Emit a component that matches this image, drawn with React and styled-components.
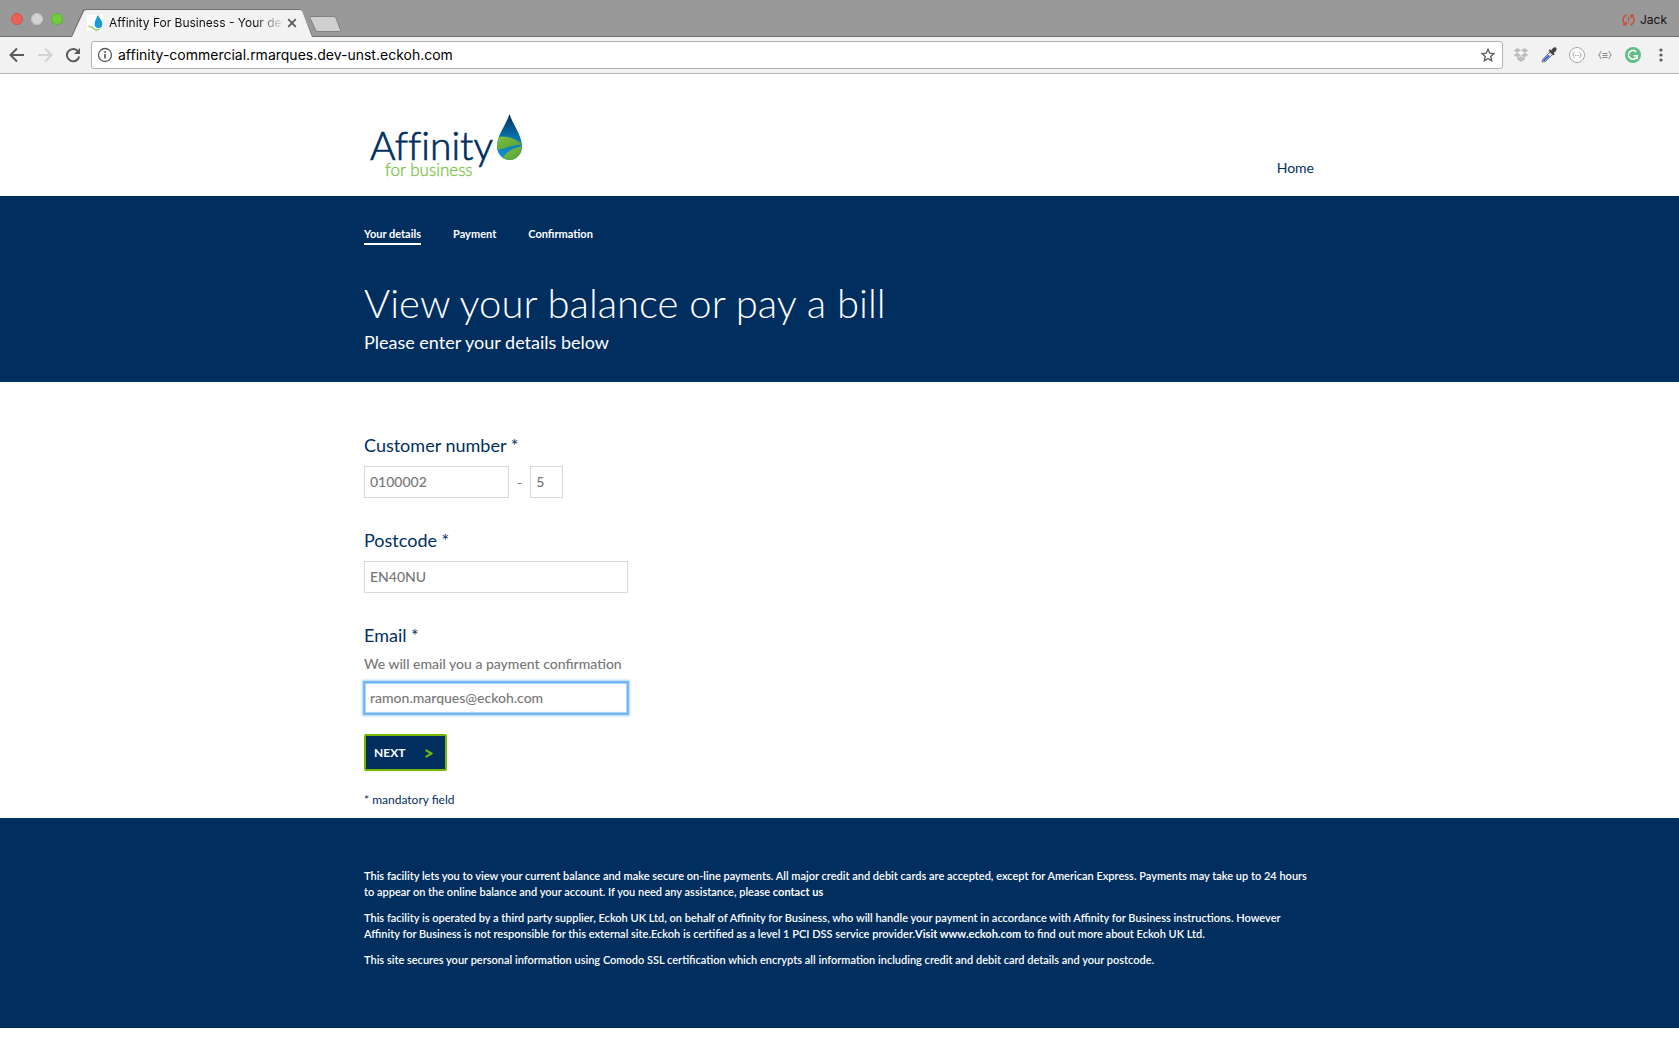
import React from "react";
import styled, { createGlobalStyle } from "styled-components";

const navy = "#002e5f";
const green = "#76b900";
const ui = `Inter, Roboto, "Liberation Sans", sans-serif`;

const GlobalStyle = createGlobalStyle`
  *, *::before, *::after { box-sizing: border-box; }
  body {
    margin: 0;
    background: #fff;
    font-family: Lato, "Open Sans", sans-serif;
    color: ${navy};
  }
  button, input { font-family: inherit; }
`;

/* Browser window */
const TitleBar = styled.div`
  display: flex;
  align-items: flex-end;
  height: 37px;
  padding: 0 12px 0 11px;
  background: #999;
  border-bottom: 1px solid #6f6f6f;
  font-family: ${ui};
`;
const WindowButtons = styled.div`
  display: flex;
  gap: 8px;
  padding-bottom: 11px;
`;
const WindowButton = styled.button`
  width: 12px;
  height: 12px;
  padding: 0;
  border: 1px solid ${(p) => p.$edge};
  border-radius: 50%;
  background: ${(p) => p.$fill};
`;
const Tab = styled.div`
  position: relative;
  isolation: isolate;
  display: flex;
  align-items: center;
  width: 242px;
  height: 28px;
  margin: 0 0 -1px 8px;
  padding: 0 13px 0 16px;
  &::before, &::after {
    content: "";
    position: absolute;
    inset: 0;
    z-index: -2;
    background: #6f6f6f;
    clip-path: polygon(0 100%, 12px 1px, 14px 0, 228px 0, 230px 1px, 100% 100%);
  }
  &::after {
    inset: 1px 1px 0 1px;
    z-index: -1;
    background: #f2f2f2;
  }
`;
const TabTitle = styled.span`
  flex: 1;
  margin-left: 6px;
  overflow: hidden;
  white-space: nowrap;
  font-size: 12px;
  line-height: 16px;
  color: #111;
  mask-image: linear-gradient(to right, #000 84%, transparent 100%);
`;
const IconButton = styled.button`
  display: flex;
  align-items: center;
  justify-content: center;
  flex: none;
  width: ${(p) => p.$size || 20}px;
  height: ${(p) => p.$size || 20}px;
  padding: 0;
  border: 0;
  background: none;
  color: ${(p) => p.$color || "#5a5a5a"};
`;
const NewTab = styled.button`
  width: 33px;
  height: 16px;
  padding: 0;
  margin: 0 0 4px -4px;
  border: 0;
  background: none;
`;
const Profile = styled.button`
  display: flex;
  align-items: center;
  gap: 5px;
  margin: 0 0 8px auto;
  padding: 0;
  border: 0;
  background: none;
  font-size: 12px;
  line-height: 16px;
  color: #111;
`;
const Toolbar = styled.div`
  display: flex;
  align-items: center;
  gap: 8px;
  height: 37px;
  padding: 0 8px 0 7px;
  background: #f2f2f2;
  border-bottom: 1px solid #b5b5b5;
  font-family: ${ui};
`;
const AddressBar = styled.label`
  display: flex;
  align-items: center;
  flex: 1;
  gap: 5px;
  height: 28px;
  padding: 0 4px 0 5px;
  border: 1px solid #b2b2b2;
  border-radius: 3px;
  background: #fff;
`;
const AddressInput = styled.input`
  flex: 1;
  min-width: 0;
  padding: 0;
  border: 0;
  outline: 0;
  background: none;
  font-size: 14px;
  line-height: 20px;
  color: #000;
`;
const Extensions = styled.div`
  display: flex;
  align-items: center;
  gap: 8px;
`;

/* Page */
const Container = styled.div`
  width: 100%;
  max-width: 951px;
  margin: 0 auto;
`;
const HeaderRow = styled(Container)`
  display: flex;
  justify-content: space-between;
  align-items: flex-end;
  padding: 38px 0 16px;
`;
const LogoLink = styled.a`
  display: block;
  margin-left: 4px;
  svg { display: block; }
`;
const HomeLink = styled.a`
  padding: 0 1px 2px 0;
  font-size: 14px;
  line-height: 20px;
  color: ${navy};
  text-decoration: none;
`;
const Hero = styled.section`
  padding: 30px 0 26px;
  background: ${navy};
  color: #fff;
`;
const Steps = styled.ol`
  display: flex;
  gap: 32px;
  margin: 0;
  padding: 0;
  list-style: none;
`;
const Step = styled.li`
  padding-bottom: 1px;
  border-bottom: 2px solid ${(p) => (p.$current ? "#fff" : "transparent")};
  font-size: 11px;
  line-height: 16px;
  font-weight: 700;
`;
const Title = styled.h1`
  margin: 33px 0 0;
  font-size: 40px;
  line-height: 50px;
  font-weight: 300;
`;
const Subtitle = styled.p`
  margin: 0;
  font-size: 18px;
  line-height: 28px;
`;
const Form = styled.form`
  padding: 49px 0 8px;
`;
const Field = styled.div`
  margin-bottom: ${(p) => (p.$last ? 20 : 28)}px;
`;
const Label = styled.label`
  display: block;
  margin-bottom: ${(p) => (p.$tight ? 5 : 7)}px;
  font-size: 18px;
  line-height: 28px;
`;
const Hint = styled.p`
  margin: 0 0 8px;
  font-size: 14px;
  line-height: 20px;
  font-weight: 500;
  color: #777;
`;
const InputRow = styled.div`
  display: flex;
  align-items: center;
  gap: 8px;
  font-size: 14px;
  color: #777;
`;
const TextInput = styled.input`
  display: block;
  width: ${(p) => p.$width}px;
  height: 32px;
  padding: 0 5px 2px;
  border: 1px solid #d9d9d9;
  outline: 0;
  background: #fff;
  font-size: 14px;
  font-weight: 500;
  color: #777;
  ${(p) =>
    p.$active &&
    `border-color: #6cb1f5;
     box-shadow: 0 0 0 1px #7dbcf9, 0 0 2px 2px #a9d3fb, inset 0 0 1px 1px #a9d3fb;`}
`;
const NextButton = styled.button`
  display: flex;
  align-items: center;
  justify-content: space-between;
  width: 83px;
  height: 37px;
  padding: 0 11px 0 8px;
  border: 2px solid ${green};
  border-radius: 2px;
  background: ${navy};
  color: #fff;
  font-size: 12px;
  line-height: 20px;
  font-weight: 700;
`;
const Arrow = styled.span`
  font-size: 18px;
  font-weight: 900;
  color: ${green};
`;
const Mandatory = styled.p`
  margin: 19px 0 0;
  font-size: 12px;
  line-height: 20px;
`;
const Footer = styled.footer`
  padding: 50px 0 60px;
  background: ${navy};
  color: #fff;
`;
const Note = styled.p`
  margin: 0 0 10px;
  font-size: 11px;
  line-height: 16px;
  font-weight: 600;
  &:last-child { margin-bottom: 0; }
`;
const NoteLink = styled.a`
  color: inherit;
  font-weight: 700;
  text-decoration: none;
`;

const Favicon = () => (
  <svg width="16" height="16" viewBox="0 0 16 16">
    <rect width="16" height="16" fill="#fff" />
    <path d="M11 0C9 4 7.600 6 7.600 9a3.700 3.700 0 0 0 7.800 0C15.400 6 13 4 11 0z" fill="#159bd7" />
    <path d="M0 12c3-2 5-1 7 1s5 2 8-1c-2 4-6 5-9 2-2-2-4-2-6-2z" fill="#8cc868" />
  </svg>
);

const Logo = () => (
  <svg width="156" height="68" viewBox="0 0 156 68" role="img" aria-label="Affinity for business">
    <defs>
      <linearGradient id="drop" x1="0" y1="0" x2="0" y2="1">
        <stop offset="0" stopColor="#05274f" />
        <stop offset="0.500" stopColor="#0872ac" />
        <stop offset="1" stopColor="#159bd9" />
      </linearGradient>
      <linearGradient id="hill" x1="0" y1="0" x2="1" y2="1">
        <stop offset="0" stopColor="#7fc142" />
        <stop offset="1" stopColor="#4f9c38" />
      </linearGradient>
      <clipPath id="dropShape">
        <path d="M141.500 2c-3 10-12.500 21-12.500 32.500a12.500 13.500 0 0 0 25 0c0-11.500-9.500-22.500-12.500-32.500z" />
      </clipPath>
    </defs>
    <text x="2" y="48" fill={navy} stroke={navy} strokeWidth="0.700" fontFamily="Lato, sans-serif" fontWeight="300" fontSize="39" style={{ fontVariantLigatures: "none" }}>Affinity</text>
    <text x="17" y="64" fill="#7ac143" stroke="#7ac143" strokeWidth="0.300" fontFamily="Lato, sans-serif" fontWeight="300" fontSize="17">for business</text>
    <g clipPath="url(#dropShape)">
      <rect x="127" width="29" height="50" fill="url(#drop)" />
      <path d="M127 27c8-5 19-2 28 6-10-1-16 4-28 5z" fill="url(#hill)" />
      <path d="M134 50c1-7 7-14 21-16v16z" fill="url(#hill)" />
    </g>
  </svg>
);

const Dropbox = () => (
  <svg width="16" height="16" viewBox="0 0 16 16" fill="#bdbdbd">
    <path d="M4.500 1 8 3.300 4.200 5.700.700 3.400zM11.500 1 8 3.300l3.800 2.400 3.500-2.300zM.700 8.100 4.200 5.800 8 8.200l-3.500 2.300zM15.300 8.100l-3.500-2.300L8 8.200l3.500 2.300zM4 11l4-1.800 4 1.800v1.200L8 15l-4-2.800z" />
  </svg>
);
const Dropper = () => (
  <svg width="18" height="18" viewBox="0 0 18 18">
    <path d="M2 16l1-3 7-7 2.500 2.500-7 7z" fill="#d7defa" stroke="#777" />
    <path d="M3 15l1-2 4-4 2 1-5 5z" fill="#3f63d8" />
    <path d="M8.500 4.500l1.400-1.300 1.300 1.200L13 2c3-2 4.500.500 3 3l-2.400 1.900 1.200 1.200-1.400 1.400z" fill="#444" />
  </svg>
);
const Braces = () => (
  <svg width="18" height="18" viewBox="0 0 18 18" fill="none" stroke="#a5a5a5">
    <circle cx="9" cy="9" r="7.500" fill="#fff" />
    <path d="M6.500 6.500q-1 0-1 1.200T4.500 9q1 0 1 1.300t1 1.200M11.500 6.500q1 0 1 1.200t1 1.300q-1 0-1 1.300t-1 1.200" />
    <path d="M7 9.500h1m.500 0h1m.500 0h1" />
  </svg>
);
const BraceList = () => (
  <svg width="16" height="16" viewBox="0 0 16 16" fill="none" stroke="#8a8a8a">
    <path d="M4.500 4.500q-1.500 0-1.500 1.700T1.500 8Q3 8 3 9.800t1.500 1.700M11.500 4.500q1.500 0 1.500 1.700T14.500 8Q13 8 13 9.800t-1.500 1.700M5.500 6.500h5M5.500 8.500h5M5.500 10.500h5" />
  </svg>
);
const Grammarly = () => (
  <svg width="18" height="18" viewBox="0 0 18 18">
    <circle cx="9" cy="9" r="8" fill="#5fc081" />
    <path d="M12.200 5.900A4.400 4.400 0 1 0 13.200 9.800H9.600" fill="none" stroke="#fff" strokeWidth="1.600" />
    <path d="M13.200 9v4" stroke="#fff" strokeWidth="1.600" />
  </svg>
);

export default function App() {
  return (
    <>
      <GlobalStyle />
      <TitleBar>
        <WindowButtons>
          <WindowButton aria-label="Close window" $fill="#ea6157" $edge="#d6524a" />
          <WindowButton aria-label="Minimise window" $fill="#d3d3d3" $edge="#c4c4c4" />
          <WindowButton aria-label="Zoom window" $fill="#6fce3c" $edge="#5cb52f" />
        </WindowButtons>
        <Tab>
          <Favicon />
          <TabTitle>Affinity For Business - Your details</TabTitle>
          <IconButton aria-label="Close tab" $size={16}>
            <svg width="10" height="10" viewBox="0 0 10 10" stroke="currentColor" strokeWidth="1.800">
              <path d="M1.200 1.200l7.600 7.600M8.800 1.200L1.200 8.800" />
            </svg>
          </IconButton>
        </Tab>
        <NewTab aria-label="New tab">
          <svg width="33" height="16" viewBox="0 0 33 16">
            <path d="M2 .500h23q1.500 0 2 1.500l4.500 12q.500 1.500-1 1.500h-22q-1.500 0-2-1.500L1 2Q.500.500 2 .500z" fill="#cfcfcf" stroke="#808080" />
          </svg>
        </NewTab>
        <Profile>
          <svg width="13" height="12" viewBox="0 0 13 12" fill="none" stroke="#c9503f" strokeWidth="1.500">
            <path d="M4.500 1C0 3 0 8 3.500 10.500M1 10.800h3v-3M8.500 11c4.500-2 4.500-7 1-9.500M12 1.200H9v3M6.500 3v4M6.500 8v1.500" />
          </svg>
          Jack
        </Profile>
      </TitleBar>
      <Toolbar>
        <IconButton aria-label="Back">
          <svg width="16" height="16" viewBox="0 0 16 16" fill="none" stroke="currentColor" strokeWidth="2">
            <path d="M15 8H2M8 1.500L1.500 8 8 14.500" />
          </svg>
        </IconButton>
        <IconButton aria-label="Forward" $color="#d2d2d2">
          <svg width="16" height="16" viewBox="0 0 16 16" fill="none" stroke="currentColor" strokeWidth="2">
            <path d="M1 8h13M8 1.500L14.500 8 8 14.500" />
          </svg>
        </IconButton>
        <IconButton aria-label="Reload">
          <svg width="16" height="16" viewBox="0 0 16 16">
            <path d="M13.200 4.500A6.200 6.200 0 1 0 14.200 9.500" fill="none" stroke="currentColor" strokeWidth="2" />
            <path d="M15 1v6H9z" fill="currentColor" />
          </svg>
        </IconButton>
        <AddressBar>
          <svg width="16" height="16" viewBox="0 0 16 16" fill="none" stroke="#5a5a5a">
            <circle cx="8" cy="8" r="6.500" strokeWidth="1.300" />
            <path d="M8 7v4.500M8 4.300v1.700" strokeWidth="1.700" />
          </svg>
          <AddressInput aria-label="Address" defaultValue="affinity-commercial.rmarques.dev-unst.eckoh.com" />
          <IconButton type="button" aria-label="Bookmark this page">
            <svg width="14" height="14" viewBox="0 0 14 14" fill="none" stroke="currentColor" strokeWidth="1.300">
              <path d="M7 1.200l1.700 4 4.300.400-3.300 2.800 1 4.300L7 10.400l-3.700 2.300 1-4.300L1 5.600l4.300-.400z" />
            </svg>
          </IconButton>
        </AddressBar>
        <Extensions>
          <IconButton aria-label="Dropbox"><Dropbox /></IconButton>
          <IconButton aria-label="Colour picker"><Dropper /></IconButton>
          <IconButton aria-label="JSON viewer"><Braces /></IconButton>
          <IconButton aria-label="JSON editor"><BraceList /></IconButton>
          <IconButton aria-label="Grammarly"><Grammarly /></IconButton>
          <IconButton aria-label="Menu">
            <svg width="4" height="14" viewBox="0 0 4 14" fill="currentColor">
              <circle cx="2" cy="2" r="1.600" />
              <circle cx="2" cy="7" r="1.600" />
              <circle cx="2" cy="12" r="1.600" />
            </svg>
          </IconButton>
        </Extensions>
      </Toolbar>

      <header>
        <HeaderRow>
          <LogoLink href="#home" aria-label="Affinity for business"><Logo /></LogoLink>
          <HomeLink href="#home">Home</HomeLink>
        </HeaderRow>
      </header>

      <Hero>
        <Container>
          <Steps>
            <Step $current aria-current="step">Your details</Step>
            <Step>Payment</Step>
            <Step>Confirmation</Step>
          </Steps>
          <Title>View your balance or pay a bill</Title>
          <Subtitle>Please enter your details below</Subtitle>
        </Container>
      </Hero>

      <Container as="main">
        <Form onSubmit={(e) => e.preventDefault()}>
          <Field>
            <Label htmlFor="customer">Customer number *</Label>
            <InputRow>
              <TextInput id="customer" $width={145} defaultValue="0100002" />
              <span>-</span>
              <TextInput aria-label="Check digit" $width={33} defaultValue="5" />
            </InputRow>
          </Field>
          <Field>
            <Label htmlFor="postcode">Postcode *</Label>
            <TextInput id="postcode" $width={264} defaultValue="EN40NU" />
          </Field>
          <Field $last>
            <Label htmlFor="email" $tight>Email *</Label>
            <Hint id="email-hint">We will email you a payment confirmation</Hint>
            <TextInput id="email" type="email" aria-describedby="email-hint" $active $width={264} defaultValue="ramon.marques@eckoh.com" />
          </Field>
          <NextButton type="submit">NEXT <Arrow>&gt;</Arrow></NextButton>
          <Mandatory>* mandatory field</Mandatory>
        </Form>
      </Container>

      <Footer>
        <Container>
          <Note>
            This facility lets you to view your current balance and make secure on-line payments. All major credit and
            debit cards are accepted, except for American Express. Payments may take up to 24 hours to appear on the
            online balance and your account. If you need any assistance, please{" "}
            <NoteLink href="#contact">contact us</NoteLink>
          </Note>
          <Note>
            This facility is operated by a third party supplier, Eckoh UK Ltd, on behalf of Affinity for Business, who
            will handle your payment in accordance with Affinity for Business instructions. However Affinity for
            Business is not responsible for this external site.Eckoh is certified as a level 1 PCI DSS service
            provider.<NoteLink href="#eckoh">Visit www.eckoh.com</NoteLink> to find out more about Eckoh UK Ltd.
          </Note>
          <Note>
            This site secures your personal information using Comodo SSL certification which encrypts all information
            including credit and debit card details and your postcode.
          </Note>
        </Container>
      </Footer>
    </>
  );
}
